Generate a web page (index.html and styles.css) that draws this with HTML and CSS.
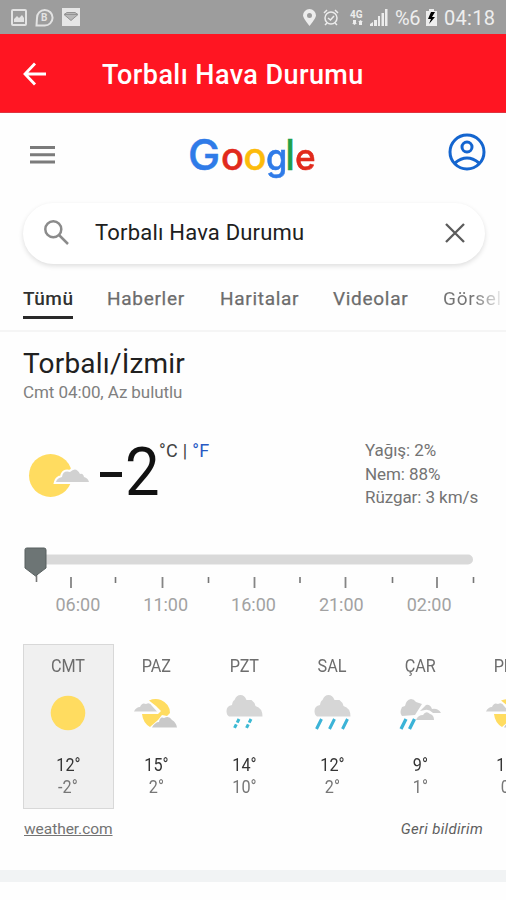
FILE: index.html
```html
<!DOCTYPE html>
<html lang="tr">
<head>
<meta charset="utf-8">
<title>Torbalı Hava Durumu</title>
<link rel="stylesheet" href="styles.css">
</head>
<body>
<svg class="defs" width="0" height="0">
  <defs>
    <symbol id="cloud" viewBox="0 0 36 22"><path fill="#d6d6d6" d="M2.500 21.500Q0 20 0 16Q0 11 5.500 10Q6 6 8 5Q10 0 14 0Q18 0 20 5L25 5Q28 7 29 11Q36 13 36 21.500Z"/></symbol>
    <symbol id="partly" viewBox="0 0 44 32">
      <path fill="#ffdc60" d="M15 4.500Q21 2 27 4Q36 8 36 17L33 20L28 19L24 24L16 31Q9 27 8 18H24L27 15L22 10Z"/>
      <path fill="#d1d1d1" d="M0 15.500Q2 11 6 11Q8 6 12 8Q16 6 18 10L23 15.500Z"/>
      <path fill="#c9c9c9" d="M18 31.500Q21 26 25 26Q26 20 30 22Q35 19 38 24Q42 26 43 31.500Z"/>
    </symbol>
  </defs>
</svg>

<header class="status">
  <div class="status-left">
    <svg width="16" height="17" viewBox="0 0 16 17"><rect x="1" y="1" width="14" height="15" rx="1" fill="none" stroke="#e3e3e3" stroke-width="2"/><path fill="#e3e3e3" d="M3 13V10L6 7L8 9L11 6L13 9V13Z"/></svg>
    <svg width="19" height="19" viewBox="0 0 19 19"><path fill="none" stroke="#e3e3e3" stroke-width="2" d="M1.500 17.500L2 10A7.800 7.800 0 1 1 9.500 17.500Z"/><text class="badge-b" x="6" y="13">B</text></svg>
    <svg width="18" height="18" viewBox="0 0 18 18"><path fill="#e6e6e6" d="M0 0H18V18H0Z"/><path fill="#b8b8b8" stroke="#949494" d="M2 6.500L5 4.500H13L16 6.500L9 12.500ZM2 6.500H16"/></svg>
  </div>
  <div class="status-right">
    <svg width="13" height="17" viewBox="0 0 13 17"><path fill="#ededed" fill-rule="evenodd" d="M6.500 17Q0 9 0 6.500A6.500 6.500 0 0 1 13 6.500Q13 9 6.500 17ZM6.500 4A2.500 2.500 0 1 0 6.500 9A2.500 2.500 0 1 0 6.500 4"/></svg>
    <svg class="alarm" width="16" height="17" viewBox="0 0 16 17"><g fill="none" stroke="#ededed" stroke-width="1.500"><circle cx="8" cy="9" r="6"/><path d="M1 4L4 1M15 4L12 1M5 9L7.500 11L11 7M4 14L2 16M12 14L14 16"/></g></svg>
    <svg class="network" width="14" height="17" viewBox="0 0 14 17"><text class="net-label" x="0" y="9">4G</text><path fill="#ededed" d="M3 11H6V14H7L4.500 16L2 14H3ZM9 16H12V13H13L10.500 11L8 13H9Z"/></svg>
    <svg class="signal" width="18" height="17" viewBox="0 0 18 17"><path fill="#ededed" d="M0 17V15L3 13V17ZM4 11H7V17H4ZM8 7H10V17H8ZM11.500 4H14V17H11.500ZM15 0H17.500V17H15Z"/></svg>
    <span class="percent">%6</span>
    <svg class="battery" width="11" height="17" viewBox="0 0 11 17"><path fill="#ededed" d="M0 2H3V0H8V2H11V17H0Z"/><path d="M5 3L2 10H5L3 15L9 8H6L9 3Z"/></svg>
    <span class="clock">04:18</span>
  </div>
</header>

<div class="appbar">
  <svg width="23" height="24" viewBox="0 0 23 24"><path fill="none" stroke="#fff" stroke-width="2.800" d="M12 1.500L2 12L12 22.500M2 12H23"/></svg>
  <h1>Torbalı Hava Durumu</h1>
</div>

<div class="masthead">
  <svg class="menu" width="25" height="18" viewBox="0 0 25 18"><path stroke="#7b7b7b" stroke-width="3" d="M0 1.500H25M0 8.800H25M0 16H25"/></svg>
  <div class="logo"><span class="blue cap">G</span><span class="red o1">o</span><span class="yellow o2">o</span><span class="blue g">g</span><span class="green l">l</span><span class="red e">e</span></div>
  <svg class="account" width="38" height="38" viewBox="0 0 38 38"><g fill="none" stroke="#1465cf" stroke-width="3"><circle cx="19" cy="19" r="17"/><circle cx="19" cy="14" r="5"/><path d="M7 30Q19 20 31 30"/></g></svg>
</div>

<div class="search">
  <svg width="25" height="25" viewBox="0 0 25 25"><g fill="none" stroke="#8b8b8b" stroke-width="2.500"><circle cx="9.300" cy="9.300" r="8"/><path d="M15 15L24 24"/></g></svg>
  <span class="query">Torbalı Hava Durumu</span>
  <svg class="clear" width="20" height="20" viewBox="0 0 20 20"><path stroke="#5b5b5b" stroke-width="2.300" d="M1 1L19 19M19 1L1 19"/></svg>
</div>

<nav class="tabs">
  <span class="tab active">Tümü</span><span class="tab haberler">Haberler</span><span class="tab haritalar">Haritalar</span><span class="tab videolar">Videolar</span><span class="tab gorsel">Görsel</span>
</nav>

<main>
  <h2>Torbalı/İzmir</h2>
  <p class="when">Cmt 04:00, Az bulutlu</p>
  <section class="current">
    <svg class="now-icon" width="60" height="44" viewBox="0 0 60 44"><circle cx="21.500" cy="21.500" r="21.500" fill="#ffdc60"/><path fill="#d1d1d1" stroke="#fefefe" stroke-width="4" paint-order="stroke" d="M27 28Q28 24 33 23Q34 16 41 18Q47 12 51 20Q54 19 55 23Q59 24 60 28Z"/></svg>
    <div class="temp"><span class="minus"></span><span class="deg">2</span></div>
    <div class="units">°C | <span>°F</span></div>
    <ul><li>Yağış: 2%</li><li>Nem: 88%</li><li class="wind">Rüzgar: 3 km/s</li></ul>
  </section>
  <section class="timeline">
    <svg width="460" height="49" viewBox="0 0 460 49"><path stroke="#d9d9d9" stroke-width="10" stroke-linecap="round" d="M12 14.500H445"/><path fill="none" stroke="#777" stroke-width="1.600" d="M13.500 30V37M92.500 32V38M185.500 32V38M277 32V38M369.500 32V38M450.500 32V38"/><path fill="none" stroke="#858585" stroke-width="1.800" d="M48 32V43M139.500 32V43M231.500 32V43M322.500 32V43M414 32V43"/><path fill="#6d7575" stroke="#596161" d="M2 4.500Q2 3 4 3H21Q23 3 23 5V23L12.500 31L2 23Z"/></svg>
    <div class="hours"><span>06:00</span><span>11:00</span><span>16:00</span><span>21:00</span><span>02:00</span></div>
  </section>
  <section class="days">
    <div class="day selected"><b>CMT</b><svg width="44" height="36" viewBox="0 0 44 36"><circle cx="22" cy="18" r="17.300" fill="#ffdc60"/></svg><span class="hi">12°</span><span class="lo">-2°</span></div>
    <div class="day"><b>PAZ</b><svg width="44" height="36" viewBox="0 0 44 36"><use href="#partly" width="44" height="32" y="1"/></svg><span class="hi">15°</span><span class="lo">2°</span></div>
    <div class="day"><b>PZT</b><svg width="44" height="36" viewBox="0 0 44 36"><use href="#cloud" x="4" width="37" height="22"/><path stroke="#3bb9d3" stroke-width="3" stroke-dasharray="4 2" d="M17 24L12 34M29 24L24 34"/></svg><span class="hi">14°</span><span class="lo">10°</span></div>
    <div class="day"><b>SAL</b><svg width="44" height="36" viewBox="0 0 44 36"><use href="#cloud" x="4" width="37" height="22"/><path stroke="#3bb3d7" stroke-width="3" d="M11.500 24L6.500 34M24.500 24L19.500 34M37.500 24L32.500 34"/></svg><span class="hi">12°</span><span class="lo">2°</span></div>
    <div class="day"><b>ÇAR</b><svg width="44" height="36" viewBox="0 0 44 36"><path fill="#d0d0d0" d="M4 21Q1 18 4 12L7 11Q8 5 13 4Q16 4 18 7L24 9L17 20ZM22 16L28 10Q32 9 34 14Q40 13 43 18H35Q31 14 27 15ZM18 25Q20 20 25 20Q28 15 32 19Q36 20 36 25Z"/><path stroke="#3bb3d7" stroke-width="3.300" d="M8 24L3 34M16.500 24L11.500 34"/></svg><span class="hi">9°</span><span class="lo">1°</span></div>
    <div class="day"><b>PER</b><svg width="44" height="36" viewBox="0 0 44 36"><use href="#partly" width="44" height="32" y="1"/></svg><span class="hi">12°</span><span class="lo">0°</span></div>
  </section>
  <footer><a>weather.com</a><em>Geri bildirim</em></footer>
</main>
<div class="divider"></div>
</body>
</html>
```

FILE: styles.css
```css
* { box-sizing: border-box; }
body { margin: 0; width: 506px; height: 900px; overflow: hidden; background: #fefefe; color: #202020; font-family: Roboto, "Liberation Sans", sans-serif; }
svg { display: block; flex: none; overflow: visible; }
.defs { position: absolute; }
h1, h2, p, ul { margin: 0; padding: 0; font-weight: 400; white-space: nowrap; }

.status { height: 34px; background: #9d9d9d; display: flex; justify-content: space-between; padding: 0 10px 0 11px; color: #eee; }
.status-left, .status-right { display: flex; align-items: center; }
.status-left { gap: 8px; }
.badge-b { font: 700 10px Roboto, sans-serif; fill: #e3e3e3; }
.net-label { font: 700 10px Roboto, sans-serif; fill: #ededed; }
.status-right { padding-top: 1px; }
.alarm { margin-left: 7px; }
.network { margin-left: 11px; }
.signal { margin-left: 6px; }
.percent { margin-left: 7px; font-size: 20px; letter-spacing: -.3px; width: 27px; }
.battery { margin-left: 4px; }
.clock { margin-left: 7px; font-size: 20px; letter-spacing: .3px; width: 52px; }

.appbar { height: 79px; background: #ff1522; color: #fff; display: flex; align-items: center; padding-left: 23px; border-bottom: 1px solid #df3440; }
.appbar svg { margin-top: 1px; }
.appbar h1 { margin-left: 56px; padding-top: 3px; font-size: 27px; font-weight: 500; letter-spacing: .43px; }

.masthead { height: 90px; display: flex; align-items: flex-start; }
.menu { margin: 33px 0 0 30px; }
.logo { display: flex; align-items: baseline; width: 128px; height: 60px; margin: 11px 0 0 133px; font: 500 38px/60px Inter, sans-serif; white-space: nowrap; }
.logo span { flex: none; transform-origin: left; }
.cap { width: 33px; font-size: 43px; }
.o1, .o2 { width: 22.500px; font-size: 38px; }
.g { width: 20px; font-size: 37px; transform: scaleX(.93); }
.l { width: 9px; font-size: 43px; transform: translateX(-.5px) scaleX(.85); }
.e { width: 20px; font-size: 37px; transform: scaleX(.95); }
.blue { color: #2f7be8; }
.red { color: #e12a1c; }
.yellow { color: #fcbb0b; }
.green { color: #20a04a; }
.logo { -webkit-text-stroke: .5px currentColor; }
.logo span { -webkit-text-stroke-color: currentColor; }
.account { margin: 20px 0 0 132px; }

.search { height: 61px; margin: 0 21px 0 23px; border-radius: 31px; background: #fff; box-shadow: 0 2px 5px rgba(0, 0, 0, .13); display: flex; align-items: center; padding: 0 20px 2px 21px; }
.query { margin-left: 26px; font-size: 22px; letter-spacing: .2px; }
.clear { margin-left: auto; }

.tabs { height: 68px; padding-left: 23px; display: flex; border-bottom: 2px solid #f5f5f5; font-size: 19px; color: #6c6c6c; white-space: nowrap; align-items: flex-start; letter-spacing: .7px; font-weight: 400; -webkit-text-stroke: .25px currentColor; }
.tab { height: 55px; padding-top: 24px; line-height: 22px; flex: none; }
.active { width: 50px; color: #303030; border-bottom: 3px solid #292929; font-weight: 500; letter-spacing: .5px; -webkit-text-stroke: 0; }
.haberler { margin-left: 34px; width: 80px; }
.haritalar { margin-left: 33px; width: 79px; }
.videolar { margin-left: 34px; width: 76px; }
.gorsel { margin-left: 34px; width: 61px; background: linear-gradient(90deg, #747474 50%, #fefefe 102%); background-clip: text; color: transparent; -webkit-text-stroke: 0; }

main { padding-left: 23px; height: 538px; }
h2 { height: 47px; padding-top: 15px; font-size: 28px; line-height: 34px; letter-spacing: .2px; }
.when { height: 29px; padding-top: 3px; font-size: 17px; line-height: 20px; letter-spacing: -.08px; color: #808080; }
.current { height: 137px; display: flex; align-items: flex-start; }
.now-icon { margin: 46px 0 0 6px; }
.temp { display: flex; margin-left: 11px; }
.minus { width: 22px; height: 5px; background: #151515; margin-top: 64px; }
.deg { margin-left: 3px; width: 34px; font-size: 67px; line-height: 80px; margin-top: 24px; color: #111; transform: scaleX(.92); transform-origin: left; }
.units { font-size: 18px; line-height: 20px; margin-top: 33px; width: 55px; white-space: nowrap; letter-spacing: .3px; color: #424242; }
.units span { color: #2759c4; }
.current ul { list-style: none; margin: 31px 0 0 151px; font-size: 17px; line-height: 23.500px; letter-spacing: -.07px; color: #737373; }
.timeline { height: 99px; }
.hours { display: flex; padding-left: 11px; font-size: 18px; line-height: 22px; color: #a2a2a2; }
.hours span { width: 87.800px; text-align: center; flex: none; }

.days { display: flex; width: 483px; height: 165px; overflow: hidden; }
.day { width: 88px; height: 165px; flex: none; display: flex; flex-direction: column; align-items: center; padding-top: 11px; line-height: 22px; }
.selected { width: 91px; margin-right: -2px; padding-right: 1px; background: #f0f0f0; border: 1px solid #d8d8d8; padding-top: 10px; }
.day b, .hi, .lo { font-size: 18px; transform: scaleX(.9); }
.day b { font-weight: 400; color: #6d6d6d; }
.day svg { margin-top: 18px; }
.hi { margin-top: 23px; color: #353535; }
.lo { color: #777; }
footer { display: flex; justify-content: space-between; padding: 10px 23px 0 1px; font-size: 15.500px; line-height: 20px; color: #737373; }
footer a { text-decoration: underline; letter-spacing: -.05px; }
footer em { font-size: 15px; letter-spacing: .33px; color: #5f5f5f; }
.divider { height: 12px; background: #f1f3f4; }
```
